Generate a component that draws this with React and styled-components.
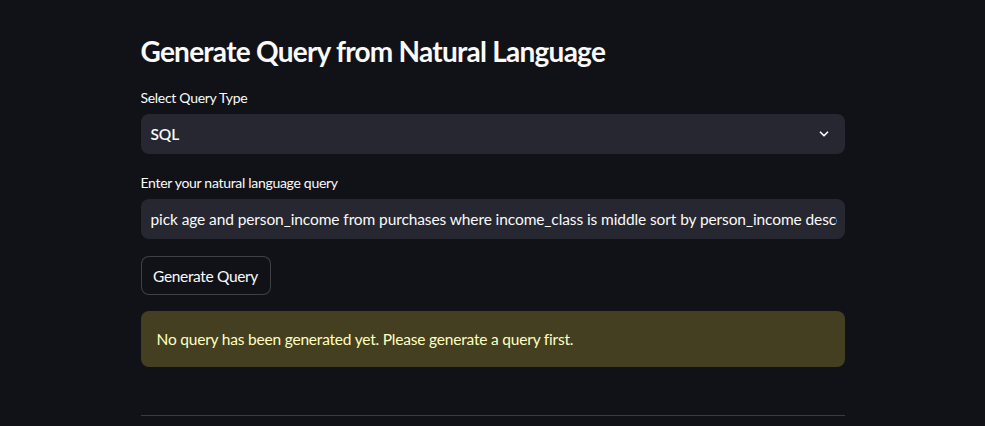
import React from 'react';
import styled, { createGlobalStyle } from 'styled-components';

const Global = createGlobalStyle`
  html, body {
    margin: 0;
    background: #111218;
  }
  body {
    font-family: 'Lato', 'Noto Sans', sans-serif;
    color: #fafafa;
  }
`;

const Page = styled.main`
  width: 704px;
  margin: 0 auto;
  padding: 35px 0 0 0;
  height: 426px;
  box-sizing: border-box;
  overflow: hidden;
`;

const Title = styled.h2`
  margin: 0 0 23px;
  font-size: 28px;
  font-weight: 700;
  line-height: 32px;
  letter-spacing: -0.75px;
  color: #fafafa;
`;

const Field = styled.div`
  display: flex;
  flex-direction: column;
  margin-bottom: ${p => p.gap || 16}px;
`;

const Label = styled.label`
  font-size: 14px;
  line-height: 16px;
  margin-bottom: 8px;
  letter-spacing: -0.3px;
  color: #fafafa;
`;

const Box = styled.div`
  height: 40px;
  box-sizing: border-box;
  background: #262730;
  border-radius: 8px;
  display: flex;
  align-items: center;
  justify-content: space-between;
  padding: 0 14px 0 10px;
  font-size: 15.5px;
  letter-spacing: -0.1px;
  color: #fafafa;
  white-space: nowrap;
`;

const Clip = styled.div`
  flex: 1;
  overflow: hidden;
  margin-right: -6px;
`;

const Value = styled.span`
  font-weight: ${p => (p.bold ? 600 : 400)};
`;

const Button = styled.button`
  align-self: flex-start;
  height: 39px;
  width: 130px;
  border: 1px solid rgba(250, 250, 250, 0.2);
  border-radius: 8px;
  background: #111218;
  color: #fafafa;
  font-family: inherit;
  font-size: 15.5px;
  letter-spacing: -0.35px;
  margin-bottom: 16px;
  padding: 0;
`;

const Warning = styled.div`
  height: 56px;
  box-sizing: border-box;
  border-radius: 8px;
  background: #433f20;
  color: #ffffc2;
  font-size: 15.5px;
  letter-spacing: -0.2px;
  display: flex;
  align-items: center;
  padding: 0 16px;
`;

const Divider = styled.hr`
  margin: 48px 0 0;
  border: none;
  border-top: 1px solid #3a3b42;
`;

export default function App() {
  return (
    <>
      <Global />
      <Page>
        <Title>Generate Query from Natural Language</Title>
        <Field gap={21}>
          <Label>Select Query Type</Label>
          <Box>
            <Value bold>SQL</Value>
            <svg width="14" height="14" viewBox="0 0 24 24" fill="none" stroke="#fafafa" strokeWidth="3" strokeLinecap="round" strokeLinejoin="round">
              <path d="M6 9l6 6 6-6" />
            </svg>
          </Box>
        </Field>
        <Field gap={17}>
          <Label>Enter your natural language query</Label>
          <Box>
            <Clip>
              <Value>pick age and person_income from purchases where income_class is middle sort by person_income descending</Value>
            </Clip>
          </Box>
        </Field>
        <Button>Generate Query</Button>
        <Warning>No query has been generated yet. Please generate a query first.</Warning>
        <Divider />
      </Page>
    </>
  );
}
